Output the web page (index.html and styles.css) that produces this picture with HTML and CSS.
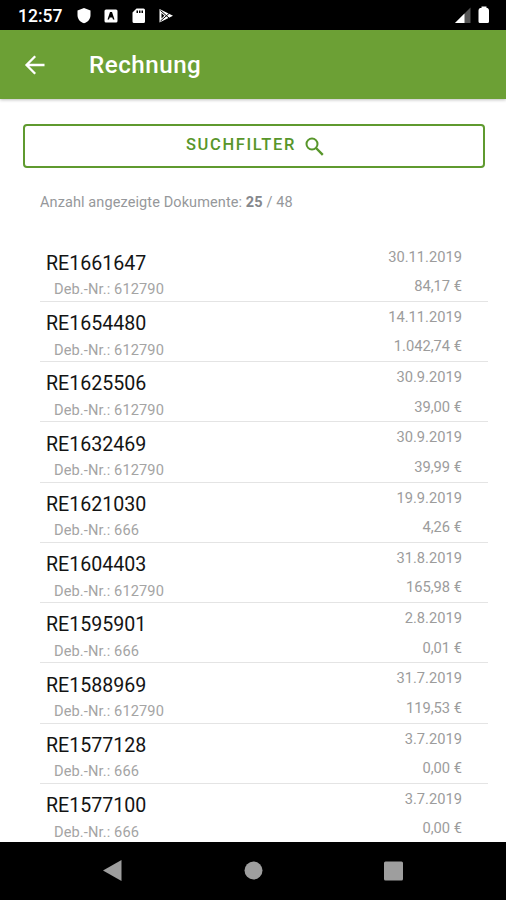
FILE: index.html
```html
<!DOCTYPE html>
<html lang="de">
<head>
<meta charset="utf-8">
<title>Rechnung</title>
<link rel="stylesheet" href="styles.css">
</head>
<body>
<div class="screen">
  <div class="status">
    <span class="clock">12:57</span>
    <svg class="status-icons" width="100" height="18" viewBox="0 0 100 18" fill="#fff">
      <path d="M7 1 13.5 3.5V8C13.5 12 11 15 7 16.3 3 15 .5 12 .5 8V3.500Z"/>
      <path fill-rule="evenodd" d="M29 2.500H39Q40.500 2.500 40.500 4V14Q40.500 15.500 39 15.500H29Q27.500 15.500 27.500 14V4Q27.500 2.500 29 2.500ZM33 5 30.500 12.500H32L32.700 10.600H35.300L36 12.500H37.500L35 5Z"/>
      <path fill-rule="evenodd" d="M59.500 1.500H66.500Q68 1.500 68 3V14.500Q68 16 66.500 16H57Q55.500 16 55.500 14.500V5.500ZM59.500 3.500V6H61V3.500ZM62 3.500V6H63.500V3.500ZM64.500 3.500V6H66V3.500Z"/>
      <path d="M82.500 2 96 8.700 82.500 15.500Z"/>
      <path d="M83.500 3.500 92 11M83.500 14 92 6.500" fill="none" stroke="#000" stroke-width="1"/>
      <path d="M84.500 6V11.500L87.300 8.700Z" fill="#000"/>
    </svg>
    <svg class="signal" width="36" height="18" viewBox="0 0 36 18">
      <path d="M0 16 15.500.5V16Z" fill="#555"/>
      <path d="M0 16 9.500 6.500V16Z" fill="#fff"/>
      <path d="M26.500 -.5H31.500V1H32.500Q34 1.500 34 3.500V14.500Q34 16 32.500 16H25Q23.500 16 23.500 14.500V3.500Q23.500 1.500 25 1H26.500Z" fill="#fff"/>
    </svg>
  </div>
  <header class="appbar">
    <svg class="back" width="20" height="20" viewBox="0 0 20 20"><path d="M19.500 10H2M10.200 1.200 1.500 10 10.200 18.800" fill="none" stroke="#fff" stroke-width="2.300"/></svg>
    <h1>Rechnung</h1>
  </header>
  <main>
    <button class="filter"><span>SUCHFILTER</span><svg width="19" height="19" viewBox="0 0 19 19" fill="none" stroke="#58962a"><circle cx="7" cy="7" r="5.500" stroke-width="2"/><path d="m11 11 6.800 6.800" stroke-width="2.400"/></svg></button>
    <p class="count">Anzahl angezeigte Dokumente: <b>25</b> / 48</p>
    <ul>
      <li><div><h2>RE1661647</h2><p>Deb.-Nr.: 612790</p></div><div class="meta"><span>30.11.2019</span><span>84,17 €</span></div></li>
      <li><div><h2>RE1654480</h2><p>Deb.-Nr.: 612790</p></div><div class="meta"><span>14.11.2019</span><span>1.042,74 €</span></div></li>
      <li><div><h2>RE1625506</h2><p>Deb.-Nr.: 612790</p></div><div class="meta"><span>30.9.2019</span><span>39,00 €</span></div></li>
      <li><div><h2>RE1632469</h2><p>Deb.-Nr.: 612790</p></div><div class="meta"><span>30.9.2019</span><span>39,99 €</span></div></li>
      <li><div><h2>RE1621030</h2><p>Deb.-Nr.: 666</p></div><div class="meta"><span>19.9.2019</span><span>4,26 €</span></div></li>
      <li><div><h2>RE1604403</h2><p>Deb.-Nr.: 612790</p></div><div class="meta"><span>31.8.2019</span><span>165,98 €</span></div></li>
      <li><div><h2>RE1595901</h2><p>Deb.-Nr.: 666</p></div><div class="meta"><span>2.8.2019</span><span>0,01 €</span></div></li>
      <li><div><h2>RE1588969</h2><p>Deb.-Nr.: 612790</p></div><div class="meta"><span>31.7.2019</span><span>119,53 €</span></div></li>
      <li><div><h2>RE1577128</h2><p>Deb.-Nr.: 666</p></div><div class="meta"><span>3.7.2019</span><span>0,00 €</span></div></li>
      <li><div><h2>RE1577100</h2><p>Deb.-Nr.: 666</p></div><div class="meta"><span>3.7.2019</span><span>0,00 €</span></div></li>
    </ul>
  </main>
  <nav>
    <svg width="506" height="58" viewBox="0 0 506 58" fill="#9e9e9e"><path d="M103 28.500 121.500 18V39Z"/><circle cx="253.500" cy="28.500" r="9"/><rect x="384" y="19.500" width="19" height="19" rx="1.500"/></svg>
  </nav>
</div>
</body>
</html>
```
FILE: styles.css
```css
* { box-sizing: border-box; }
body, h1, h2, p, ul { margin: 0; padding: 0; }
body { font-family: Roboto, "Liberation Sans", sans-serif; background: #fff; }
svg { display: block; flex: none; overflow: visible; }
.screen { width: 506px; height: 900px; display: flex; flex-direction: column; overflow: hidden; }
.status { height: 30px; flex: none; background: #000; display: flex; align-items: center; padding: 1px 15px 0 18px; color: #fff; }
.clock { width: 59px; font-size: 17.5px; font-weight: 500; line-height: 20px; }
.status-icons { margin-top: 1px; }
.signal { margin-left: auto; }
.appbar { height: 69px; flex: none; background: #6ca035; display: flex; align-items: center; padding-left: 25px; color: #fff; box-shadow: 0 1px 3px rgba(0, 0, 0, .25); }
.appbar h1 { margin-left: 44px; font-size: 24.2px; font-weight: 500; line-height: 30px; letter-spacing: .5px; }
main { flex: 1; min-height: 0; overflow: hidden; padding-top: 24.500px; }
.filter { display: flex; align-items: center; justify-content: center; gap: 9px; width: 462px; height: 44px; margin-left: 23px; padding: 0 0 1px 2px; border: 2px solid #5f9a2f; border-radius: 4px; background: #fff; color: #58962a; font: 500 16.5px Roboto, sans-serif; letter-spacing: 1.65px; }
.filter span { margin-top: -1px; }
.filter svg { margin-top: 2px; }
.count { margin: 25px 0 0 40px; font-size: 14.500px; line-height: 20px; letter-spacing: .1px; color: #96989b; white-space: nowrap; }
.count b { font-weight: 700; color: #85878b; }
ul { list-style: none; margin: 29px 18px 0 40px; }
li { height: 60.25px; display: flex; justify-content: space-between; border-bottom: 1.500px solid #e4e4e4; padding: 0 26px 0 6px; }
li h2 { padding-top: 10.300px; font-size: 19.600px; line-height: 24px; font-weight: 400; color: #141414; }
li p { padding: 3.700px 0 0 8px; font-size: 14.600px; line-height: 20px; letter-spacing: .12px; color: #a4a4a4; }
.meta { display: flex; flex-direction: column; align-items: flex-end; padding-top: 5px; gap: 9.500px; font-size: 14.700px; line-height: 20px; color: #9c9c9c; }
nav { height: 58.500px; flex: none; background: #000; }
```
